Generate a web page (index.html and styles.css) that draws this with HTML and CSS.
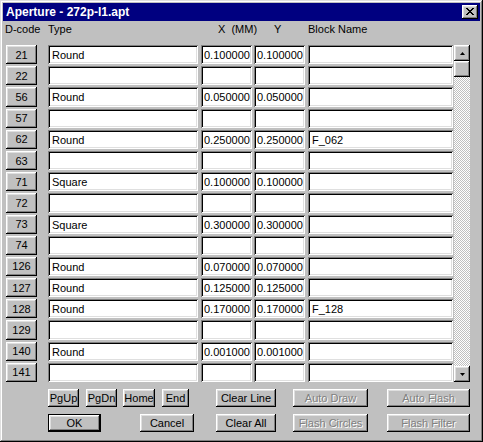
FILE: index.html
```html
<!DOCTYPE html>
<html>
<head>
<meta charset="utf-8">
<link rel="stylesheet" href="styles.css">
</head>
<body>
<div class="window">
  <div class="titlebar">
    <span class="title">Aperture - 272p-l1.apt</span>
    <span class="btn close">
      <svg width="8" height="7" viewBox="0 0 8 7" shape-rendering="crispEdges"><path d="M0 0h2v1h-2zM6 0h2v1h-2zM1 1h2v1h-2zM5 1h2v1h-2zM2 2h4v1h-4zM3 3h2v1h-2zM2 4h4v1h-4zM1 5h2v1h-2zM5 5h2v1h-2zM0 6h2v1h-2zM6 6h2v1h-2z" fill="#000"/></svg>
    </span>
  </div>
  <div class="body">
    <div class="cols header">
      <div>D-code</div>
      <div>Type</div>
      <div class="hx">X&nbsp; (MM)</div>
      <div class="hy">Y</div>
      <div>Block Name</div>
    </div>
    <div class="cols table">
      <div class="scroll">
        <span class="btn sbtn"><svg width="5" height="3" viewBox="0 0 5 3"><polygon points="2.5,0 5,3 0,3" fill="#000"/></svg></span>
        <span class="btn sbtn"></span>
        <span class="track"></span>
        <span class="btn sbtn"><svg width="5" height="3" viewBox="0 0 5 3"><polygon points="0,0 5,0 2.5,3" fill="#000"/></svg></span>
      </div>
      <div class="row"><span class="btn dcode">21</span><span class="field t">Round</span><span class="field n">0.100000</span><span class="field n">0.100000</span><span class="field b"></span></div>
      <div class="row"><span class="btn dcode">22</span><span class="field t"></span><span class="field n"></span><span class="field n"></span><span class="field b"></span></div>
      <div class="row"><span class="btn dcode">56</span><span class="field t">Round</span><span class="field n">0.050000</span><span class="field n">0.050000</span><span class="field b"></span></div>
      <div class="row"><span class="btn dcode">57</span><span class="field t"></span><span class="field n"></span><span class="field n"></span><span class="field b"></span></div>
      <div class="row"><span class="btn dcode">62</span><span class="field t">Round</span><span class="field n">0.250000</span><span class="field n">0.250000</span><span class="field b">F_062</span></div>
      <div class="row"><span class="btn dcode">63</span><span class="field t"></span><span class="field n"></span><span class="field n"></span><span class="field b"></span></div>
      <div class="row"><span class="btn dcode">71</span><span class="field t">Square</span><span class="field n">0.100000</span><span class="field n">0.100000</span><span class="field b"></span></div>
      <div class="row"><span class="btn dcode">72</span><span class="field t"></span><span class="field n"></span><span class="field n"></span><span class="field b"></span></div>
      <div class="row"><span class="btn dcode">73</span><span class="field t">Square</span><span class="field n">0.300000</span><span class="field n">0.300000</span><span class="field b"></span></div>
      <div class="row"><span class="btn dcode">74</span><span class="field t"></span><span class="field n"></span><span class="field n"></span><span class="field b"></span></div>
      <div class="row"><span class="btn dcode">126</span><span class="field t">Round</span><span class="field n">0.070000</span><span class="field n">0.070000</span><span class="field b"></span></div>
      <div class="row"><span class="btn dcode">127</span><span class="field t">Round</span><span class="field n">0.125000</span><span class="field n">0.125000</span><span class="field b"></span></div>
      <div class="row"><span class="btn dcode">128</span><span class="field t">Round</span><span class="field n">0.170000</span><span class="field n">0.170000</span><span class="field b">F_128</span></div>
      <div class="row"><span class="btn dcode">129</span><span class="field t"></span><span class="field n"></span><span class="field n"></span><span class="field b"></span></div>
      <div class="row"><span class="btn dcode">140</span><span class="field t">Round</span><span class="field n">0.001000</span><span class="field n">0.001000</span><span class="field b"></span></div>
      <div class="row"><span class="btn dcode">141</span><span class="field t"></span><span class="field n"></span><span class="field n"></span><span class="field b"></span></div>
    </div>
    <div class="actions">
      <div class="nav">
        <span class="btn pb w31">PgUp</span>
        <span class="btn pb w31 ml7">PgDn</span>
        <span class="btn pb w32 ml6">Home</span>
        <span class="btn pb w27 ml7">End</span>
      </div>
      <span class="btn pb w60">Clear Line</span>
      <span class="btn pb w75 dis">Auto Draw</span>
      <span class="btn pb w83 dis">Auto Flash</span>
      <div class="nav">
        <span class="btn pb def">OK</span>
        <span class="btn pb w54 ml40">Cancel</span>
      </div>
      <span class="btn pb w60">Clear All</span>
      <span class="btn pb w75 dis">Flash Circles</span>
      <span class="btn pb w83 dis">Flash Filter</span>
    </div>
  </div>
</div>
</body>
</html>
```

FILE: styles.css
```css
* { box-sizing: border-box; }
body {
  margin: 0;
  background: #c0c0c0;
  font-family: "Liberation Sans", Arial, sans-serif;
  font-size: 11px;
  color: #000;
}
.window {
  width: 483px;
  height: 442px;
  padding: 3px;
  background: #c0c0c0;
  box-shadow: inset -1px -1px 0 #000, inset 1px 1px 0 #dfdfdf, inset -2px -2px 0 #808080, inset 2px 2px 0 #fff;
}
.titlebar {
  height: 18px;
  background: #000080;
  display: flex;
  align-items: center;
  justify-content: space-between;
  padding: 0 2px 0 3px;
}
.title {
  color: #fff;
  font-weight: bold;
  font-size: 12px;
  line-height: 18px;
}
.btn {
  background: #c0c0c0;
  box-shadow: inset -1px -1px 0 #000, inset 1px 1px 0 #fff, inset -2px -2px 0 #808080, inset 2px 2px 0 #dfdfdf;
  display: flex;
  align-items: center;
  justify-content: center;
  white-space: nowrap;
}
.close {
  width: 16px;
  height: 14px;
  padding: 0 1px 1px 0;
}
.body {
  padding-left: 3px;
}
.cols {
  display: grid;
  grid-template-columns: 42px 153px 53px 54px 146px 16px;
}
.header {
  height: 24px;
  padding-top: 2px;
  line-height: 13px;
  white-space: nowrap;
}
.header > div:first-child { margin-left: -1px; }
.hx { padding-left: 17px; }
.hy { padding-left: 20px; }
.table {
  height: 337px;
  grid-template-rows: repeat(16, 1fr);
  row-gap: 2px;
}
.row { display: contents; }
.dcode {
  width: 31px;
  height: 100%;
}
.field {
  height: 100%;
  background: #fff;
  box-shadow: inset 1px 1px 0 #808080, inset -1px -1px 0 #fff, inset 2px 2px 0 #000, inset -2px -2px 0 #dfdfdf;
  padding: 2px 4px 0 4px;
  line-height: 17px;
  white-space: nowrap;
  overflow: hidden;
}
.field.t { width: 150px; }
.field.n { width: 51px; padding-left: 3px; }
.field.b { width: 145px; }
.scroll {
  grid-column: 6;
  grid-row: 1 / -1;
  display: flex;
  flex-direction: column;
}
.sbtn {
  width: 16px;
  height: 16px;
  flex: none;
}
.track {
  flex: 1;
  background: repeating-conic-gradient(#c0c0c0 0 25%, #fff 0 50%) 0 0 / 2px 2px;
}
.actions {
  display: grid;
  grid-template-columns: 168px 77px 94px 83px;
  grid-template-rows: 18px 18px;
  row-gap: 7px;
  margin-top: 7px;
  margin-left: 42px;
}
.nav { display: flex; }
.pb { height: 18px; }
.w27 { width: 27px; }
.w31 { width: 31px; }
.w32 { width: 32px; }
.w54 { width: 54px; }
.w60 { width: 60px; }
.w75 { width: 75px; }
.w83 { width: 83px; }
.ml6 { margin-left: 6px; }
.ml7 { margin-left: 7px; }
.ml40 { margin-left: 39px; }
.def {
  width: 53px;
  border: 1px solid #000;
}
.dis {
  color: #808080;
  text-shadow: 1px 1px 0 #fff;
}
```
